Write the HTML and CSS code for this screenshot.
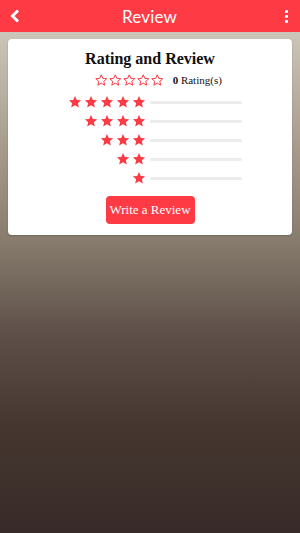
FILE: index.html
```html
<!DOCTYPE html>
<html lang="en">
<head>
    <meta charset="UTF-8">
    <meta name="viewport" content="width=device-width, initial-scale=1.0">
    <title>Review</title>
    <link rel="stylesheet" href="styles.css">
</head>
<body>
    <svg width="0" height="0" class="defs">
        <defs>
            <path id="star" d="M12 1.5l3.1 6.9 7.4.7-5.6 5 1.7 7.4L12 17.6l-6.6 3.9 1.7-7.4-5.6-5 7.4-.7z"/>
        </defs>
    </svg>

    <!-- Top bar -->
    <header class="topbar">
        <svg class="back-icon" viewBox="0 0 12 14"><path d="M9 1.5L3.5 7 9 12.5" fill="none" stroke="#fff" stroke-width="3"/></svg>
        <h1 class="topbar-title">Review</h1>
        <div class="menu-dots"><span></span><span></span><span></span></div>
    </header>

    <!-- Review card -->
    <div class="card">
        <h2 class="card-title">Rating and Review</h2>

        <div class="summary">
            <div class="stars-outline">
                <svg viewBox="0 0 24 24"><use href="#star"/></svg>
                <svg viewBox="0 0 24 24"><use href="#star"/></svg>
                <svg viewBox="0 0 24 24"><use href="#star"/></svg>
                <svg viewBox="0 0 24 24"><use href="#star"/></svg>
                <svg viewBox="0 0 24 24"><use href="#star"/></svg>
            </div>
            <span class="count"><b>0</b> Rating(s)</span>
        </div>

        <div class="rating-rows">
            <div class="rating-row">
                <div class="stars">
                    <svg viewBox="0 0 24 24"><use href="#star"/></svg>
                    <svg viewBox="0 0 24 24"><use href="#star"/></svg>
                    <svg viewBox="0 0 24 24"><use href="#star"/></svg>
                    <svg viewBox="0 0 24 24"><use href="#star"/></svg>
                    <svg viewBox="0 0 24 24"><use href="#star"/></svg>
                </div>
                <div class="bar"></div>
            </div>
            <div class="rating-row">
                <div class="stars">
                    <svg viewBox="0 0 24 24"><use href="#star"/></svg>
                    <svg viewBox="0 0 24 24"><use href="#star"/></svg>
                    <svg viewBox="0 0 24 24"><use href="#star"/></svg>
                    <svg viewBox="0 0 24 24"><use href="#star"/></svg>
                </div>
                <div class="bar"></div>
            </div>
            <div class="rating-row">
                <div class="stars">
                    <svg viewBox="0 0 24 24"><use href="#star"/></svg>
                    <svg viewBox="0 0 24 24"><use href="#star"/></svg>
                    <svg viewBox="0 0 24 24"><use href="#star"/></svg>
                </div>
                <div class="bar"></div>
            </div>
            <div class="rating-row">
                <div class="stars">
                    <svg viewBox="0 0 24 24"><use href="#star"/></svg>
                    <svg viewBox="0 0 24 24"><use href="#star"/></svg>
                </div>
                <div class="bar"></div>
            </div>
            <div class="rating-row">
                <div class="stars">
                    <svg viewBox="0 0 24 24"><use href="#star"/></svg>
                </div>
                <div class="bar"></div>
            </div>
        </div>

        <button class="write-btn">Write a Review</button>
    </div>
</body>
</html>
```

FILE: styles.css
```css
* {
    margin: 0;
    padding: 0;
    box-sizing: border-box;
}

html, body {
    height: 100%;
}

body {
    font-family: "Liberation Serif", "DejaVu Serif", serif;
    background: linear-gradient(to bottom, #cbc6b9 6%, #a69b8b 28%, #887c6e 45%, #5f5149 62%, #45372f 80%, #382a28 100%);
    color: #111;
}

.defs {
    position: absolute;
}

/* Top bar */
.topbar {
    height: 32px;
    background: #fe3a45;
    display: flex;
    align-items: center;
    justify-content: space-between;
    padding: 0 10px 0 9px;
}

.back-icon {
    width: 12px;
    height: 14px;
}

.topbar-title {
    font-family: Lato, "Open Sans", sans-serif;
    font-weight: normal;
    font-size: 17px;
    color: #fff;
    letter-spacing: 0.2px;
}

.menu-dots {
    display: flex;
    flex-direction: column;
    gap: 2px;
    width: 12px;
    align-items: flex-end;
    padding-right: 2px;
}

.menu-dots span {
    width: 3px;
    height: 3px;
    background: #fff;
    border-radius: 1px;
}

/* Card */
.card {
    background: #fff;
    margin: 7px 8px 0;
    border-radius: 4px;
    padding: 11px 0 11px;
    display: flex;
    flex-direction: column;
    align-items: center;
    box-shadow: 0 1px 2px rgba(0, 0, 0, 0.2);
}

.card-title {
    font-size: 16px;
    font-weight: bold;
    line-height: 18px;
}

.summary {
    display: flex;
    align-items: center;
    margin-top: 4px;
    height: 16px;
    padding-left: 17px;
}

.stars-outline {
    display: flex;
    gap: 1.5px;
}

.stars-outline svg {
    width: 12.5px;
    height: 12.5px;
    fill: none;
    stroke: #fe3a45;
    stroke-width: 1.9;
}

.count {
    font-size: 11px;
    margin-left: 9px;
}

.count b {
    font-size: 11px;
}

/* Rating rows */
.rating-rows {
    display: flex;
    flex-direction: column;
    gap: 5px;
    margin-top: 7px;
    padding-left: 8px;
}

.rating-row {
    display: flex;
    align-items: center;
    gap: 4px;
    height: 14px;
}

.stars {
    width: 80px;
    display: flex;
    justify-content: flex-end;
    gap: 2px;
}

.stars svg {
    width: 14px;
    height: 14px;
    fill: #fe3a45;
}

.bar {
    width: 92px;
    height: 3px;
    background: #ececec;
    border-radius: 2px;
}

/* Button */
.write-btn {
    margin-top: 11px;
    background: #fe3a45;
    color: #fff;
    border: none;
    border-radius: 4px;
    font-family: "Liberation Serif", "DejaVu Serif", serif;
    font-size: 13px;
    width: 89px;
    height: 28px;
}
```
